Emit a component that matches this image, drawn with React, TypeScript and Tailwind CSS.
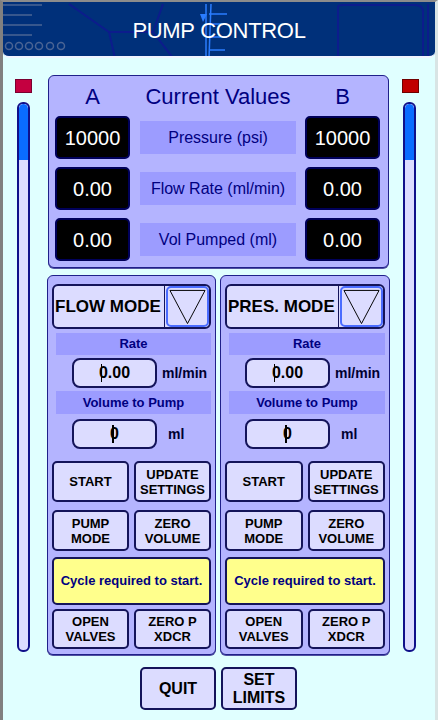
import React from "react";

const font = "font-['Liberation_Sans',Arial,sans-serif]";

function Btn({ children, className = "" }: { children: React.ReactNode; className?: string }) {
  return (
    <div
      className={
        "flex items-center justify-center text-center rounded-[5px] border-2 border-[#14145a] bg-[#dcdcff] font-bold text-[13px] leading-[15px] text-black " +
        className
      }
    >
      {children}
    </div>
  );
}

function ValueBox({ value }: { value: string }) {
  return (
    <div className="w-[75px] h-[43px] flex items-center justify-center rounded-[5px] border-2 border-[#00005a] bg-black text-white text-[20px]">
      {value}
    </div>
  );
}

function ValueRow({ label, a, b }: { label: string; a: string; b: string }) {
  return (
    <div className="flex items-center">
      <ValueBox value={a} />
      <div className="ml-[10px] w-[156px] h-[33px] flex items-center justify-center bg-[#9c9cff] text-[#000080] text-[16px]">
        {label}
      </div>
      <div className="ml-[9px]">
        <ValueBox value={b} />
      </div>
    </div>
  );
}

function Bar() {
  return (
    <div className="mt-[9px] w-[13px] h-[550px] rounded-[6px] border-2 border-[#10108a] bg-[#dcdcff] overflow-hidden flex flex-col">
      <div className="h-[56px] bg-[#0a6cff] rounded-t-[5px]" />
    </div>
  );
}

function Input({ value, unit }: { value: string; unit: string }) {
  return (
    <div className="flex items-center">
      <div className="w-[85px] h-[30px] flex items-center justify-center rounded-[8px] border-2 border-[#14145a] bg-[#dcdcff] font-bold text-[16px] leading-[16px] text-black">
        <span className="relative">
          <span className="absolute left-[2px] top-[-1px] bottom-[-1px] w-[1.5px] bg-black" />
          {value}
        </span>
      </div>
      <span className={"font-bold text-[14px] text-[#000030] " + (unit === "ml" ? "ml-[11px]" : "ml-[5px]")}>{unit}</span>
    </div>
  );
}

function ModePanel({ mode }: { mode: string }) {
  return (
    <div className="h-[380px] rounded-[6px] border border-[#20208a] bg-[#b4b4ff] pt-[8px] pl-[4px] pr-[4px] shadow-[0_1px_0_#5050a0]">
      <div className="h-[45px] flex rounded-[6px] border-2 border-[#14145a] bg-[#dcdcff]">
        <div className="flex-1 flex items-center pl-[1px] font-bold text-[17px] text-black">{mode}</div>
        <div className="w-[45px] border-l border-[#14145a] flex items-center justify-center">
          <div className="w-[43px] h-[41px] rounded-[5px] border-2 border-[#4a6cff] flex items-center justify-center">
            <svg width="40" height="38" viewBox="0 0 40 38">
              <path d="M2 2 L38 2 L20 36 Z" fill="none" stroke="#000" strokeWidth="1" />
            </svg>
          </div>
        </div>
      </div>
      <div className="ml-[4px] mt-[4px] h-[22px] flex items-center justify-center bg-[#9c9cff] font-bold text-[13px] text-[#000080]">
        Rate
      </div>
      <div className="mt-[3px] pl-[20px]">
        <Input value="0.00" unit="ml/min" />
      </div>
      <div className="ml-[4px] mt-[3px] h-[23px] flex items-center justify-center bg-[#9c9cff] font-bold text-[13px] text-[#000080]">
        Volume to Pump
      </div>
      <div className="mt-[5px] pl-[20px]">
        <Input value="0" unit="ml" />
      </div>
      <div className="mt-[12px] grid grid-cols-2 gap-x-[5px] gap-y-[8px]">
        <Btn className="h-[41px]">START</Btn>
        <Btn className="h-[41px]">
          UPDATE
          <br />
          SETTINGS
        </Btn>
        <Btn className="h-[41px]">
          PUMP
          <br />
          MODE
        </Btn>
        <Btn className="h-[41px]">
          ZERO
          <br />
          VOLUME
        </Btn>
      </div>
      <div className="mt-[6px] h-[48px] flex items-center justify-center rounded-[5px] border-2 border-[#14145a] bg-[#ffff8c] font-bold text-[13px] text-[#000080]">
        Cycle required to start.
      </div>
      <div className="mt-[4px] grid grid-cols-2 gap-x-[5px]">
        <Btn className="h-[40px]">
          OPEN
          <br />
          VALVES
        </Btn>
        <Btn className="h-[40px]">
          ZERO P
          <br />
          XDCR
        </Btn>
      </div>
    </div>
  );
}

function HeaderArt() {
  return (
    <svg className="absolute inset-0" width="432" height="56" viewBox="0 0 432 56">
      <g stroke="#4a6494" strokeWidth="1.5" fill="none">
        <path d="M0 3 H39 M0 13 H29 M0 23 H39 M0 33 H29" />
        <circle cx="6" cy="44" r="3.5" />
        <circle cx="16" cy="44" r="3.5" />
        <circle cx="26" cy="44" r="3.5" />
        <circle cx="36" cy="44" r="3.5" />
        <circle cx="47" cy="44" r="3.5" />
        <circle cx="58" cy="44" r="3.5" />
      </g>
      <g stroke="#0c1c8c" strokeWidth="2" fill="none">
        <path d="M66 2 L106 30 L150 30 L160 2" />
        <path d="M106 30 L112 56" />
        <path d="M150 30 L170 56" />
        <path d="M335 5 Q335 3 340 3 L412 3 Q420 3 420 10 L420 56" />
        <path d="M335 5 L335 56" />
        <path d="M425 2 L425 56" />
      </g>
      <g stroke="#2a7cff" strokeWidth="1.5" fill="none">
        <path d="M203 2 L203 56" />
        <path d="M208 2 L206 56" />
        <path d="M206 12 L224 12 M206 22 L222 22 M206 35 L224 35 M206 48 L222 48" />
      </g>
      <path d="M197 12 L204 12 L200 20 Z" fill="#2a7cff" />
    </svg>
  );
}

export default function App() {
  return (
    <div className={"w-[438px] h-[720px] overflow-hidden bg-[#e0ffff] border-l-[3px] border-l-[#808080] border-t-2 border-t-[#8c8c8c] border-r-[3px] border-r-[#d8e4e4] " + font}>
      <div className="relative h-[56px] bg-[#00307a] rounded-b-[6px] border-b-2 border-b-[#f0f4ff] overflow-hidden">
        <HeaderArt />
        <div className="relative h-full flex items-center justify-center pt-[2px] text-white text-[22px] tracking-[-0.3px]">
          PUMP CONTROL
        </div>
      </div>
      <div className="flex">
        <div className="w-[44px] pl-[12px] pt-[21px]">
          <div className="w-[17px] h-[14px] bg-[#c40040] border border-[#7a0030]" />
          <div className="ml-[2px]">
            <Bar />
          </div>
        </div>
        <div className="w-[343px]">
          <div className="mt-[17px] mx-[1px] h-[193px] rounded-[6px] border border-[#20208a] bg-[#b4b4ff] pl-[6px] shadow-[0_1px_0_#5050a0]">
            <div className="h-[40px] flex items-center text-[#000080] text-[22px]">
              <div className="w-[75px] text-center">A</div>
              <div className="ml-[10px] w-[156px] text-center">Current Values</div>
              <div className="ml-[9px] w-[75px] text-center">B</div>
            </div>
            <div className="flex flex-col gap-[8px]">
              <ValueRow label="Pressure (psi)" a="10000" b="10000" />
              <ValueRow label="Flow Rate (ml/min)" a="0.00" b="0.00" />
              <ValueRow label="Vol Pumped (ml)" a="0.00" b="0.00" />
            </div>
          </div>
          <div className="mt-[7px] grid grid-cols-[169px_170px] gap-[4px]">
            <ModePanel mode="FLOW MODE" />
            <ModePanel mode="PRES. MODE" />
          </div>
          <div className="mt-[12px] flex justify-center gap-[5px]">
            <Btn className="w-[76px] h-[43px] text-[16px] leading-[18px]">QUIT</Btn>
            <Btn className="w-[76px] h-[43px] text-[16px] leading-[18px]">
              SET
              <br />
              LIMITS
            </Btn>
          </div>
        </div>
        <div className="w-[43px] pl-[12px] pt-[21px]">
          <div className="w-[17px] h-[14px] bg-[#c00000] border border-[#700000]" />
          <div className="ml-[1px]">
            <Bar />
          </div>
        </div>
      </div>
    </div>
  );
}
